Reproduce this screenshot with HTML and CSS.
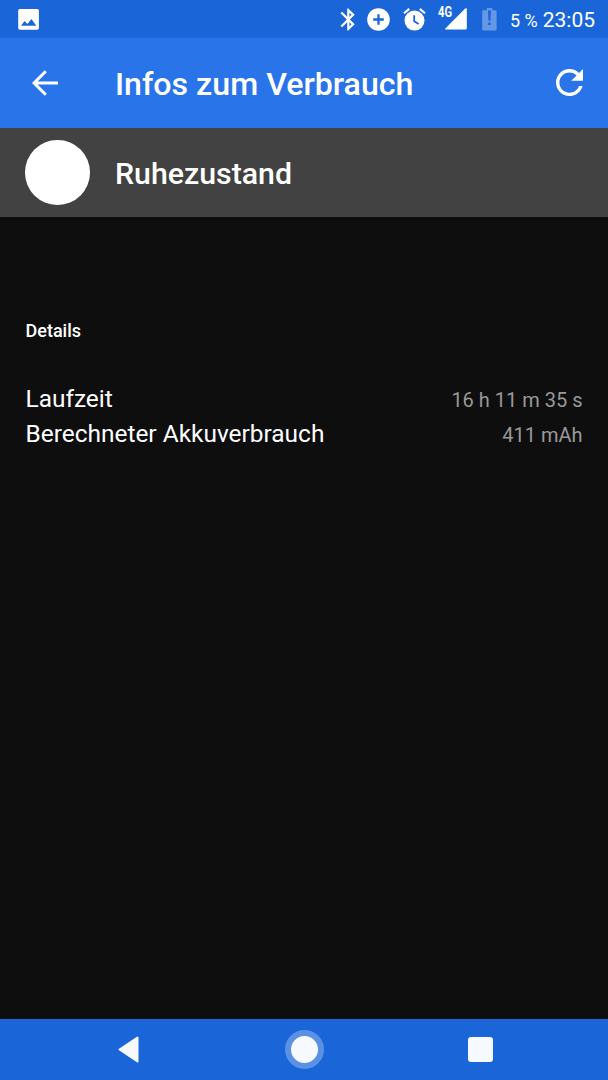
FILE: index.html
```html
<!DOCTYPE html>
<html lang="de">
<head>
<meta charset="UTF-8" />
<meta name="viewport" content="width=device-width, initial-scale=1" />
<title>Infos zum Verbrauch</title>
<link rel="stylesheet" href="styles.css">
</head>
<body>

<div class="statusbar">
  <svg class="icon-photo" width="21" height="21" viewBox="0 0 21 21">
    <rect x=".2" width="20.7" height="20.7" rx="1.8" fill="#fff"/>
    <path d="M3 16.8L6.6 12l2.8 3.1 4-5.1 4.9 6.8z" fill="#1a66d8"/>
  </svg>
  <div class="status-icons">
    <svg class="icon-bluetooth" width="15" height="23" viewBox="4.5 2 13.5 20">
      <path fill="#fff" d="M17.71 7.71L12 2h-1v7.59L6.41 5 5 6.41 10.59 12 5 17.59 6.41 19 11 14.41V22h1l5.71-5.71-4.3-4.29 4.3-4.29zM13 5.83l1.88 1.88L13 9.59V5.83zm1.88 10.46L13 18.17v-3.76l1.88 1.88z"/>
    </svg>
    <svg class="icon-plus" width="23" height="23" viewBox="0 0 23 23">
      <circle cx="11.5" cy="11.5" r="11.3" fill="#fff"/>
      <path d="M11.5 6.2v10.6M6.2 11.5h10.6" stroke="#1a66d8" stroke-width="2.3"/>
    </svg>
    <svg class="icon-alarm" width="23" height="23" viewBox="0 0 23 23">
      <circle cx="11.5" cy="12.6" r="10" fill="#fff"/>
      <path d="M11.2 7.2v6.1l4.4 2.8" fill="none" stroke="#1a66d8" stroke-width="1.8"/>
      <path d="M1 5.2L6.2.9M16.8.9L22 5.2" stroke="#fff" stroke-width="2.1"/>
    </svg>
    <div class="signal">
      <svg width="22" height="22" viewBox="0 0 22 22">
        <path d="M20.2.6Q21.8-.6 21.8 1.4V20Q21.8 21.6 20.2 21.6H1.2Q-.6 21.6.8 20z" fill="#fff"/>
      </svg>
      <span class="network">4G</span>
    </div>
    <svg class="icon-battery" width="15" height="23" viewBox="0 0 15 23">
      <path d="M4.8 0h5.4v2.2H13.4Q14.6 2.2 14.6 3.4V21.2Q14.6 22.4 13.4 22.4H1.4Q.2 22.4.2 21.2V3.4Q.2 2.2 1.4 2.2H4.8z" fill="#6697e4"/>
      <path d="M6 2.6h3l-.5 10.2h-2zM6.2 14.4h2.6v2.5H6.2z" fill="#1a66d8"/>
    </svg>
    <span class="percent">5 %</span>
    <span class="clock">23:05</span>
  </div>
</div>

<div class="appbar">
  <svg class="back" width="26" height="26" viewBox="0 0 26 26">
    <path d="M13.8 1.2L2 13l11.8 11.8M2.2 13H26" fill="none" stroke="#fff" stroke-width="3"/>
  </svg>
  <h1>Infos zum Verbrauch</h1>
  <svg class="refresh" width="27" height="27" viewBox="4 4 16 16">
    <path fill="#fff" d="M17.65 6.35C16.2 4.9 14.21 4 12 4c-4.42 0-7.99 3.58-7.99 8s3.57 8 7.99 8c3.73 0 6.84-2.55 7.73-6h-2.08c-.82 2.33-3.04 4-5.65 4-3.31 0-6-2.69-6-6s2.69-6 6-6c1.66 0 3.14.69 4.22 1.78L13 11h7V4l-2.35 2.35z"/>
  </svg>
</div>

<div class="entry">
  <div class="avatar"></div>
  <h2>Ruhezustand</h2>
</div>

<div class="content">
  <h3>Details</h3>
  <div class="row">
    <span>Laufzeit</span>
    <span class="value">16 h 11 m 35 s</span>
  </div>
  <div class="row">
    <span>Berechneter Akkuverbrauch</span>
    <span class="value">411 mAh</span>
  </div>
</div>

<div class="navbar">
  <svg class="nav-back" width="21" height="27" viewBox="0 0 21 27">
    <path d="M1.5 13.5L19.5 1.5v24z" fill="#f6f9fe" stroke="#f6f9fe" stroke-width="2" stroke-linejoin="round"/>
  </svg>
  <div class="nav-home"></div>
  <div class="nav-recent"></div>
</div>

</body>
</html>
```
FILE: styles.css
```css
* {
  box-sizing: border-box;
}
body {
  margin: 0;
  height: 1080px;
  display: flex;
  flex-direction: column;
  background: #0e0e0e;
  color: #fff;
  font-family: Roboto, sans-serif;
}
h1, h2, h3 {
  margin: 0;
  font-weight: 500;
}
svg {
  display: block;
  flex: none;
}
.statusbar {
  height: 38px;
  display: flex;
  justify-content: space-between;
  align-items: center;
  padding: 0 13px 0 18px;
  background: #1a66d8;
}
.status-icons {
  display: flex;
  align-items: center;
}
.icon-plus {
  margin-left: 12px;
}
.icon-alarm {
  margin-left: 13px;
}
.signal {
  position: relative;
  margin-left: 19px;
}
.network {
  position: absolute;
  left: -7px;
  top: -3px;
  font-size: 14px;
  line-height: 14px;
  font-weight: 700;
  transform: scaleX(0.8);
  transform-origin: left;
}
.icon-battery {
  margin-left: 15px;
}
.percent {
  margin-left: 13px;
  font-size: 18px;
  padding-top: 2px;
}
.clock {
  margin-left: 5px;
  font-size: 21px;
  padding-top: 1px;
}
.appbar {
  height: 89.5px;
  display: flex;
  align-items: center;
  padding: 0 25px 0 32px;
  background: #2874e8;
}
.appbar h1 {
  flex: 1;
  margin-left: 57px;
  padding-top: 3px;
  font-size: 32.15px;
}
.entry {
  height: 89.5px;
  display: flex;
  align-items: center;
  padding-left: 25px;
  background: #424242;
}
.avatar {
  width: 64.5px;
  height: 64.5px;
  border-radius: 50%;
  background: #fff;
}
.entry h2 {
  margin-left: 25.5px;
  padding-top: 3px;
  font-size: 30.3px;
}
.content {
  flex: 1;
  padding: 103px 25.5px 0;
}
.content h3 {
  margin-bottom: 40px;
  font-size: 18px;
  line-height: 22px;
}
.row {
  display: flex;
  justify-content: space-between;
  align-items: baseline;
  font-size: 24.45px;
  line-height: 34px;
}
.value {
  font-size: 20px;
  color: #999;
}
.navbar {
  height: 61px;
  display: flex;
  align-items: center;
  padding-left: 118px;
  background: #1a66d8;
}
.nav-home {
  width: 39px;
  height: 39px;
  margin-left: 146px;
  border: 6.5px solid #5a91e4;
  border-radius: 50%;
  background: #f6f9fe;
}
.nav-recent {
  width: 25px;
  height: 25px;
  margin-left: 144px;
  border-radius: 3px;
  background: #f6f9fe;
}
```
